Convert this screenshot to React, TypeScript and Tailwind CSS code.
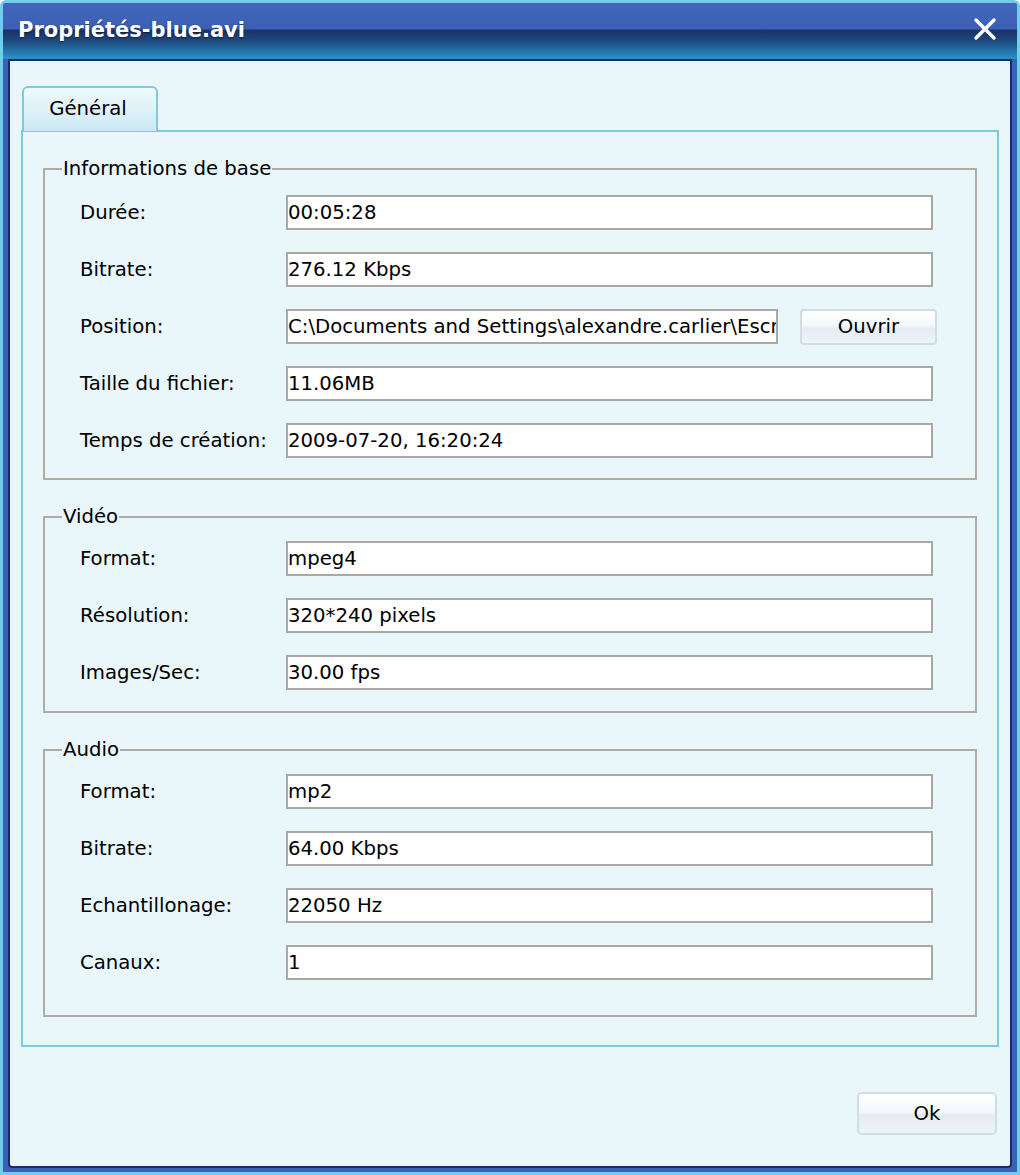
import React from "react";

const font = { fontFamily: '"DejaVu Sans", Verdana, sans-serif' };

function Field({ label, value, children }: { label: string; value: string; children?: React.ReactNode }) {
  return (
    <div className="flex items-center h-[35px]">
      <div className="w-[206px] shrink-0 text-[19.7px] text-black leading-none">{label}</div>
      {children ? (
        children
      ) : (
        <div className="w-[647px] h-[35px] bg-white border-2 border-[#a9a9a4] flex items-center overflow-hidden whitespace-nowrap text-[19.7px] leading-none text-black">
          {value}
        </div>
      )}
    </div>
  );
}

function Group({ title, pt, pb, children }: { title: string; pt: string; pb: string; children: React.ReactNode }) {
  return (
    <fieldset className={`border-2 border-[#aeaca4] ${pb}`}>
      <legend className="ml-[17px] px-[1px] text-[19.7px] leading-[22px] text-black">{title}</legend>
      <div className={`flex flex-col gap-[22px] pl-[35px] ${pt}`}>{children}</div>
    </fieldset>
  );
}

export default function App() {
  return (
    <div style={font} className="w-[1020px] h-[1175px] bg-[#3a60b8] border-[3px] border-[#70cdec] rounded-t-[6px] flex flex-col overflow-hidden">
      <div className="h-[56px] shrink-0 flex items-center justify-between pl-[15px] pr-[20px] bg-[linear-gradient(to_bottom,#4268ba_0%,#3b5fb4_46%,#1c3167_49%,#1d4a80_68%,#2a94c6_100%)]">
        <span className="text-white font-bold text-[21px] leading-none mb-[2px] [text-shadow:0_1px_2px_rgba(0,0,0,0.5)]">Propriétés-blue.avi</span>
        <svg width="24" height="24" viewBox="0 0 24 24" className="mb-[5px]">
          <path d="M3 3 L21 21 M21 3 L3 21" stroke="#ffffff" strokeWidth="3.4" strokeLinecap="round" />
        </svg>
      </div>
      <div className="flex-1 mx-[5px] mb-[4px] border-2 border-[#1b2a6b] bg-[#e9f6fa] rounded-b-[4px] flex flex-col">
        <div className="pl-[11px] pr-[10px] pt-[25px]">
          <div className="flex">
            <div className="ml-[1px] w-[136px] h-[45px] rounded-t-[6px] border-2 border-b-0 border-[#82c9dc] bg-[linear-gradient(to_bottom,#eef9fc_0%,#ddf1f8_55%,#c9e8f3_100%)] flex items-center justify-center text-[19.7px] leading-none text-black pb-[1px] pr-[4px]">
              Général
            </div>
          </div>
          <div className="w-[978px] border-2 border-[#82c9dc] -mt-[1px] px-[20px] pt-[26px] pb-[28px] flex flex-col gap-[26px]">
            <Group title="Informations de base" pt="pt-[15px]" pb="pb-[20px]">
              <Field label="Durée:" value="00:05:28" />
              <Field label="Bitrate:" value="276.12 Kbps" />
              <Field label="Position:" value="">
                <div className="flex items-center">
                  <div className="w-[492px] h-[35px] bg-white border-2 border-[#a9a9a4] flex items-center overflow-hidden whitespace-nowrap text-[19.7px] leading-none text-black">
                    C:\Documents and Settings\alexandre.carlier\Escr
                  </div>
                  <button className="ml-[22px] w-[137px] h-[36px] rounded-[4px] border-2 border-[#cfdde6] bg-[linear-gradient(to_bottom,#ffffff_0%,#f4f8fa_45%,#e4ecf2_55%,#eef4f8_100%)] text-[19.7px] leading-none text-black">
                    Ouvrir
                  </button>
                </div>
              </Field>
              <Field label="Taille du fichier:" value="11.06MB" />
              <Field label="Temps de création:" value="2009-07-20, 16:20:24" />
            </Group>
            <Group title="Vidéo" pt="pt-[13px]" pb="pb-[21px]">
              <Field label="Format:" value="mpeg4" />
              <Field label="Résolution:" value="320*240 pixels" />
              <Field label="Images/Sec:" value="30.00 fps" />
            </Group>
            <Group title="Audio" pt="pt-[13px]" pb="pb-[35px]">
              <Field label="Format:" value="mp2" />
              <Field label="Bitrate:" value="64.00 Kbps" />
              <Field label="Echantillonage:" value="22050 Hz" />
              <Field label="Canaux:" value="1" />
            </Group>
          </div>
        </div>
        <div className="flex-1 flex items-end justify-end pr-[13px] pb-[31px]">
          <button className="w-[140px] h-[43px] rounded-[5px] border-2 border-[#cfdde6] bg-[linear-gradient(to_bottom,#ffffff_0%,#f4f8fa_45%,#e4ecf2_55%,#eef4f8_100%)] text-[19.7px] leading-none text-black">
            Ok
          </button>
        </div>
      </div>
    </div>
  );
}
